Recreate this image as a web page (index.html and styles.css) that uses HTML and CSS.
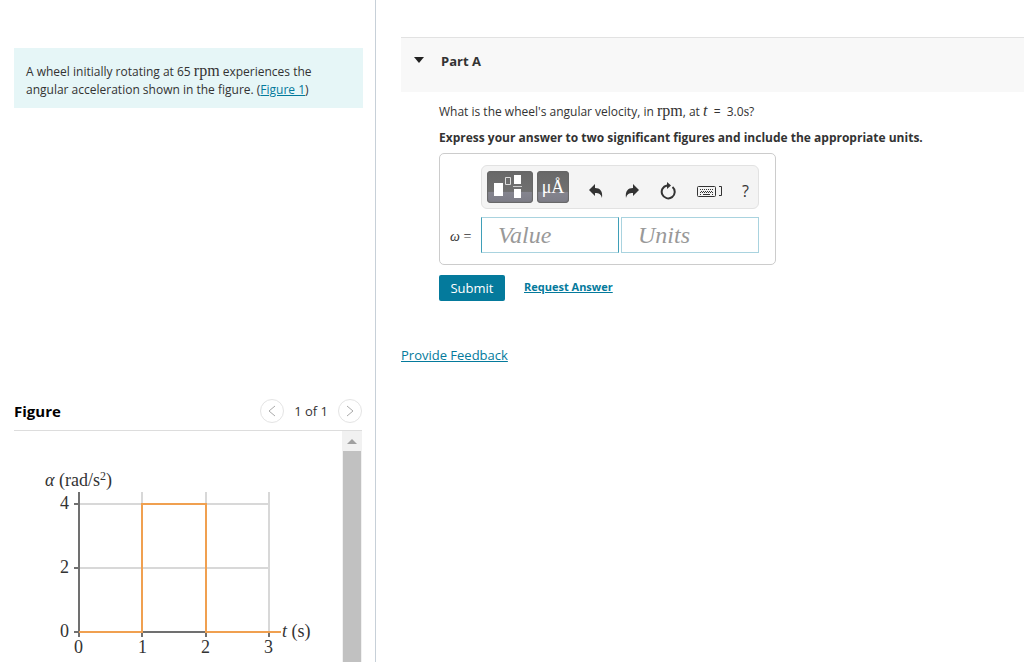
FILE: index.html
```html
<!DOCTYPE html>
<html lang="en">
<head>
<meta charset="utf-8">
<title>Part A</title>
<link rel="stylesheet" href="styles.css">
</head>

<body>
<div class="page">
  <aside class="sidebar">
    <div class="problem">
      A wheel initially rotating at 65 <span class="math">rpm</span> experiences the angular acceleration shown in the figure. (<a href="#figure">Figure 1</a>)
    </div>

    <section class="figure" id="figure">
      <div class="figure-head">
        <h2>Figure</h2>
        <div class="pager">
          <button type="button" class="round" aria-label="Previous figure">
            <svg width="8" height="12" viewBox="0 0 8 12"><path d="M7 1L1 6l6 5"/></svg>
          </button>
          <span>1 of 1</span>
          <button type="button" class="round" aria-label="Next figure">
            <svg width="8" height="12" viewBox="0 0 8 12"><path d="M1 1l6 5-6 5"/></svg>
          </button>
        </div>
      </div>
      <div class="figure-body">
        <svg class="graph" width="320" height="231" viewBox="0 0 320 231">
          <g class="grid">
            <path d="M128 61V200M192 61V200M255 61V200M65 73H255M65 137H255"/>
          </g>
          <g class="axis">
            <path d="M65 61V206M60 201H255M60 73h5M60 137h5M128 201v5M192 201v5M255 201v5"/>
          </g>
          <path class="curve" d="M65 201H128V73H192V201H267"/>
          <g class="labels">
            <text x="31" y="55"><tspan class="var">α</tspan> (rad/s<tspan class="sup" dy="-6">2</tspan><tspan dy="6">)</tspan></text>
            <text x="46" y="78">4</text>
            <text x="46" y="142">2</text>
            <text x="46" y="206">0</text>
            <text x="60" y="222">0</text>
            <text x="124" y="222">1</text>
            <text x="187" y="222">2</text>
            <text x="250" y="222">3</text>
            <text x="268" y="206"><tspan class="var">t</tspan> (s)</text>
          </g>
        </svg>
        <div class="scrollbar">
          <div class="scroll-up"></div>
          <div class="scroll-thumb"></div>
        </div>
      </div>
    </section>
  </aside>

  <main class="content">
    <header class="part-head">
      <span class="arrow"></span>
      <h1>Part A</h1>
    </header>

    <div class="part">
      <p>What is the wheel's angular velocity, in <span class="math">rpm</span>, at <span class="math"><i>t</i></span>&nbsp; =&nbsp; 3.0<span class="math small">s</span>?</p>
      <p class="instructions">Express your answer to two significant figures and include the appropriate units.</p>

      <form class="answer-form">
        <div class="answer">
          <div class="toolbar">
            <button type="button" class="dark templates" aria-label="Templates">
              <svg width="46" height="32" viewBox="0 0 46 32">
                <path fill="#fff" d="M7 12h9v13H7zM27 4h7v9h-7zM27 18h7v9h-7z"/>
                <path fill="#ccc" d="M26 15h9v1h-9z"/>
                <path fill="none" stroke="#ddd" d="M18.500 6.500h5v7h-5z"/>
              </svg>
            </button>
            <button type="button" class="dark symbols">μÅ</button>
            <div class="tools">
              <button type="button" class="tool" aria-label="Undo">
                <svg width="16" height="16" viewBox="0 0 16 16"><path fill="#333" d="M1 7l6-6v4c5 0 8 3 7 10-1-4-3-5-7-5v3z"/></svg>
              </button>
              <button type="button" class="tool" aria-label="Redo">
                <svg width="16" height="16" viewBox="0 0 16 16"><path fill="#333" d="M15 7L9 1v4c-5 0-8 3-7 10 1-4 3-5 7-5v3z"/></svg>
              </button>
              <button type="button" class="tool" aria-label="Reset">
                <svg width="18" height="18" viewBox="0 0 18 18"><path fill="none" stroke="#333" stroke-width="2" d="M13.500 5a6.500 6.500 0 1 1-5.500-1.500"/><path fill="#333" d="M8 0l4 3.500-4 3.500z"/></svg>
              </button>
              <button type="button" class="tool keyboard" aria-label="Keyboard shortcuts">
                <svg width="26" height="14" viewBox="0 0 26 14">
                  <rect x="0.500" y="2.500" width="18" height="10" rx="1" fill="none" stroke="#333"/>
                  <path stroke="#333" stroke-dasharray="1 1" d="M3 5.500h13M4 7.500h12M3 8.500h13"/>
                  <path stroke="#333" d="M3 10.500h1M6 10.500h7M15 10.500h1"/>
                  <path fill="none" stroke="#333" d="M22 2.500h2.500v9H22"/>
                </svg>
              </button>
              <button type="button" class="tool help" aria-label="Help">?</button>
            </div>
          </div>
          <div class="fields">
            <label for="value" class="math"><i>ω</i> =</label>
            <input type="text" id="value" class="value" placeholder="Value">
            <input type="text" class="units" placeholder="Units" aria-label="Units">
          </div>
        </div>

        <div class="actions">
          <button type="submit" class="submit">Submit</button>
          <a href="#answer">Request Answer</a>
        </div>
      </form>
    </div>

    <a class="feedback" href="#feedback">Provide Feedback</a>
  </main>
</div>
</body>
</html>
```
FILE: styles.css
```css
* {
  box-sizing: border-box;
}

body {
  margin: 0;
  background: #fff;
  color: #333;
  font: 12px/18px "Open Sans", "Noto Sans", sans-serif;
}

h1, h2, p {
  margin: 0;
}

a {
  color: #047a9c;
}

button {
  padding: 0;
  border: 0;
  font: inherit;
  cursor: pointer;
}

svg {
  display: block;
}

.math {
  font-family: "Liberation Serif", serif;
  font-size: 16px;
  line-height: 1;
}

.math.small {
  font-size: 14px;
}

.page {
  display: flex;
  min-height: 100vh;
}

/* left column */

.sidebar {
  display: flex;
  flex-direction: column;
  justify-content: space-between;
  flex: 0 0 376px;
  padding: 48px 12px 0 14px;
  border-right: 1px solid #c7d0d8;
}

.problem {
  padding: 15px 32px 9px 12px;
  background: #e6f6f7;
}

.figure {
  padding-right: 1px;
}

.figure-head {
  display: flex;
  justify-content: space-between;
  align-items: center;
  height: 40px;
  border-bottom: 1px solid #ddd;
}

.figure-head h2 {
  color: #000;
  font-size: 15px;
}

.pager {
  display: flex;
  align-items: center;
  gap: 10px;
  font-size: 13px;
}

.round {
  display: flex;
  align-items: center;
  justify-content: center;
  width: 24px;
  height: 24px;
  border: 1px solid #e4e4e4;
  border-radius: 50%;
  background: #fff;
}

.round path {
  fill: none;
  stroke: #aaa;
}

.figure-body {
  display: flex;
  justify-content: space-between;
}

.scrollbar {
  width: 20px;
  background: #f1f1f1;
}

.scroll-up {
  height: 20px;
  padding: 8px 5px;
}

.scroll-up:before {
  content: '';
  display: block;
  border: 5px solid transparent;
  border-top: 0;
  border-bottom-color: #a0a0a0;
}

.scroll-thumb {
  height: 211px;
  margin: 0 1px;
  background: #c1c1c1;
}

.grid path {
  fill: none;
  stroke: #d8d8d8;
  stroke-width: 2;
}

.axis path {
  fill: none;
  stroke: #707070;
  stroke-width: 2;
}

.curve {
  fill: none;
  stroke: #f0a050;
  stroke-width: 2;
}

.labels {
  fill: #333;
  font: 18px "Liberation Serif", serif;
}

.labels .var {
  font-style: italic;
}

.labels .sup {
  font-size: 12px;
}

/* right column */

.content {
  flex: 1;
  min-width: 0;
  padding: 37px 0 0 25px;
}

.part-head {
  display: flex;
  gap: 17px;
  height: 55px;
  padding: 14px 13px;
  border-top: 1px solid #e2e2e2;
  background: #f8f8f8;
}

.part-head h1 {
  font-size: 13px;
}

.arrow {
  width: 10px;
  height: 6px;
  margin-top: 5px;
  border: 5px solid transparent;
  border-top: 6px solid #222;
  border-bottom: 0;
}

.part {
  padding: 11px 38px 0;
}

.instructions {
  margin-top: 8px;
  font-weight: bold;
}

.answer {
  width: 337px;
  max-width: 100%;
  margin-top: 6px;
  padding: 11px 16px 11px 10px;
  border: 1px solid #ccc;
  border-radius: 5px;
}

.toolbar {
  display: flex;
  gap: 4px;
  height: 44px;
  margin-left: 31px;
  padding: 5px;
  border: 1px solid #e2e2e2;
  border-radius: 6px;
  background: #f4f4f4;
}

.dark {
  height: 32px;
  border-radius: 4px;
  background: linear-gradient(#686868, #707070 64%, #85858f 65%, #7c7c86);
  box-shadow: inset 0 0 1px 1px #666;
  color: #fff;
}

.templates {
  width: 46px;
}

.symbols {
  width: 32px;
  font: 18px "Liberation Serif", serif;
}

.tools {
  display: flex;
  flex: 1;
  align-items: center;
  justify-content: space-between;
  padding: 8px 4px 0 15px;
}

.tool {
  background: none;
  color: #333;
}

.help {
  font-size: 16px;
}

.fields {
  display: flex;
  align-items: center;
  gap: 2px;
  margin-top: 8px;
}

.fields label {
  width: 29px;
  padding-top: 4px;
  font-size: 14px;
}

.fields input {
  flex: 1;
  min-width: 0;
  height: 36px;
  padding: 0 16px;
  border: 1px solid #a9d3df;
  outline: 0;
  background: #fff;
  font: italic 24px "Liberation Serif", serif;
}

.fields .value {
  border-right-color: #3f9fb8;
  border-left-color: #3f9fb8;
}

.fields input::placeholder {
  color: #999;
}

.actions {
  display: flex;
  gap: 19px;
  margin-top: 10px;
}

.actions a {
  margin-top: 3px;
  font-size: 11px;
  font-weight: bold;
}

.submit {
  width: 66px;
  height: 26px;
  border-radius: 2px;
  background: #047a9c;
  color: #fff;
  font-size: 13px;
}

.feedback {
  display: inline-block;
  margin-top: 45px;
  font-size: 13px;
}
```
